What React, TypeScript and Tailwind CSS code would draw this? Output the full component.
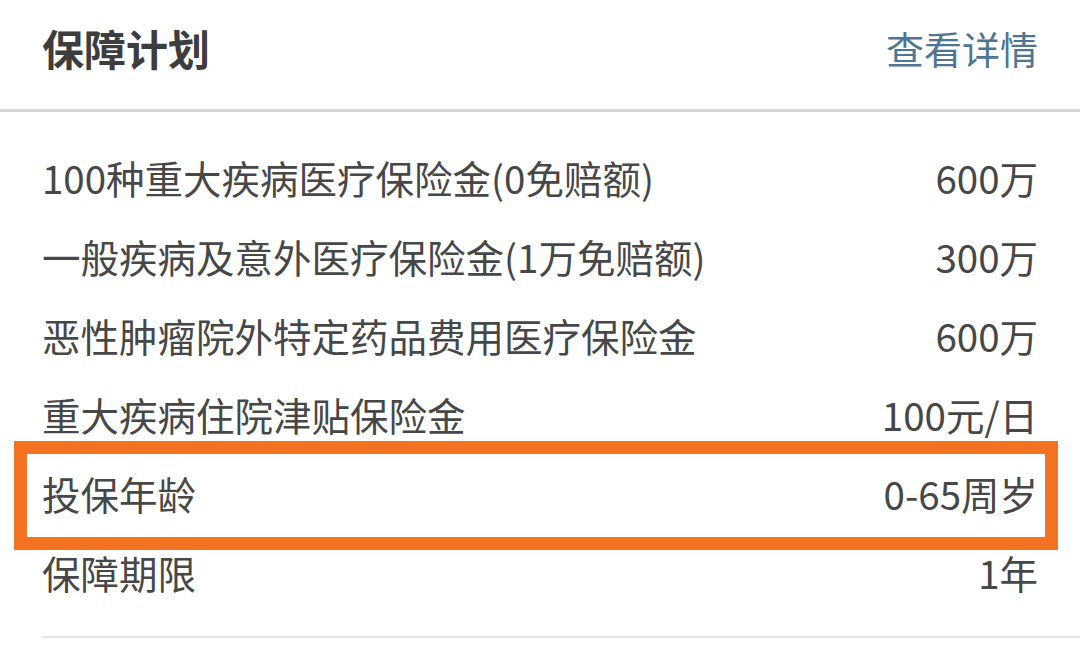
const rows = [
  { label: '100种重大疾病医疗保险金(0免赔额)', value: '600万' },
  { label: '一般疾病及意外医疗保险金(1万免赔额)', value: '300万' },
  { label: '恶性肿瘤院外特定药品费用医疗保险金', value: '600万' },
  { label: '重大疾病住院津贴保险金', value: '100元/日' },
  { label: '投保年龄', value: '0-65周岁', highlight: true },
  { label: '保障期限', value: '1年' },
]

export default function App() {
  return (
    <div className="w-[1080px] h-[655px] overflow-hidden bg-white font-['Noto_Sans_CJK_SC','Noto_Sans',sans-serif]">
      {/* header */}
      <header className="flex h-[112px] items-center justify-between border-b-[3px] border-[#d6d6d6] px-[42px] pb-[14px]">
        <h1 className="text-[42px] font-bold leading-none text-[#3d3d3d]">保障计划</h1>
        <a className="text-[38px] leading-none text-[#4f7592]">查看详情</a>
      </header>

      {/* rows */}
      <div className="ml-[42px] border-b-2 border-[#e6e6e6] pt-[26px] pb-[24px]">
        {rows.map((row) => (
          <div
            key={row.label}
            className="relative mr-[42px] flex h-[79px] items-center justify-between text-[38.5px] leading-none text-[#474747]"
          >
            <span>{row.label}</span>
            <span>{row.value}</span>
            {row.highlight && (
              <span className="pointer-events-none absolute -top-[13px] -bottom-[17px] -left-[28px] -right-[20px] border-[13px] border-[#f37322]" />
            )}
          </div>
        ))}
      </div>
    </div>
  )
}
